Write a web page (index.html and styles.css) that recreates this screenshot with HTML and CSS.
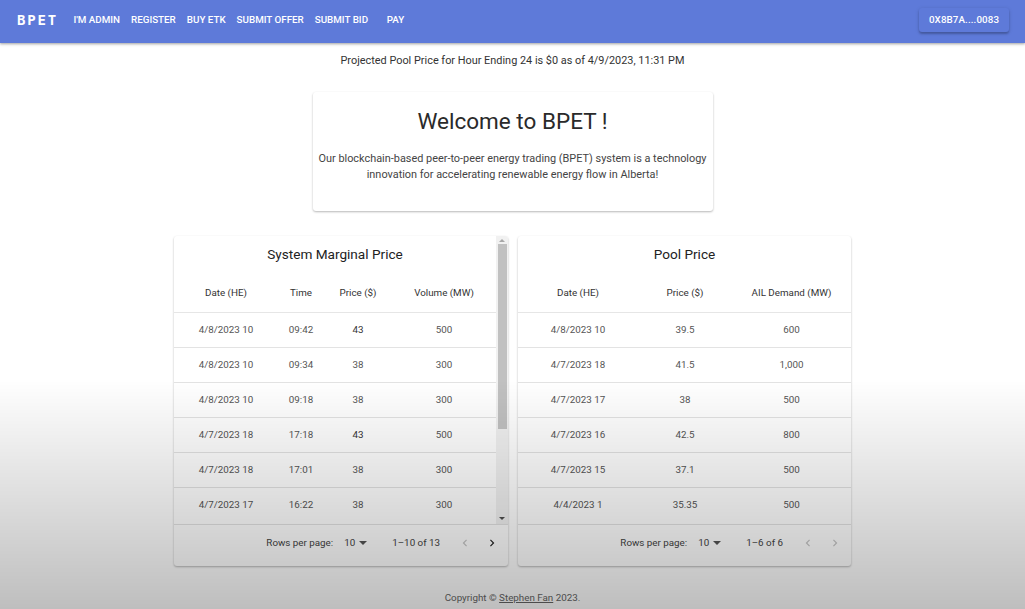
FILE: index.html
```html
<!DOCTYPE html>
<html lang="en">
<head>
<meta charset="utf-8">
<title>BPET</title>
<link rel="stylesheet" href="styles.css">
</head>
<body>
<header class="appbar">
  <div class="logo">BPET</div>
  <nav class="nav">
    <a class="nav-btn">I'M ADMIN</a>
    <a class="nav-btn">REGISTER</a>
    <a class="nav-btn">BUY ETK</a>
    <a class="nav-btn">SUBMIT OFFER</a>
    <a class="nav-btn">SUBMIT BID</a>
    <a class="nav-btn">PAY</a>
  </nav>
  <button class="wallet">0X8B7A....0083</button>
</header>

<main class="main">
  <p class="projected">Projected Pool Price for Hour Ending 24 is $0 as of 4/9/2023, 11:31 PM</p>

  <section class="card welcome">
    <h1 class="welcome-title">Welcome to BPET !</h1>
    <p class="welcome-text">Our blockchain-based peer-to-peer energy trading (BPET) system is a technology<br>innovation for accelerating renewable energy flow in Alberta!</p>
  </section>

  <div class="tables">
    <section class="card table-card">
      <div class="table-body">
        <div class="scroll">
          <h2 class="table-title">System Marginal Price</h2>
          <table class="data smp">
            <colgroup><col class="c1"><col class="c2"><col class="c3"><col class="c4"></colgroup>
            <thead><tr><th>Date (HE)</th><th>Time</th><th>Price ($)</th><th>Volume (MW)</th></tr></thead>
            <tbody>
              <tr><td>4/8/2023 10</td><td>09:42</td><td class="dark">43</td><td>500</td></tr>
              <tr><td>4/8/2023 10</td><td>09:34</td><td>38</td><td>300</td></tr>
              <tr><td>4/8/2023 10</td><td>09:18</td><td>38</td><td>300</td></tr>
              <tr><td>4/7/2023 18</td><td>17:18</td><td class="dark">43</td><td>500</td></tr>
              <tr><td>4/7/2023 18</td><td>17:01</td><td>38</td><td>300</td></tr>
              <tr><td>4/7/2023 17</td><td>16:22</td><td>38</td><td>300</td></tr>
            </tbody>
          </table>
        </div>
        <div class="scrollbar" aria-hidden="true">
          <span class="sb-arrow"><svg width="6" height="3" viewBox="0 0 6 3"><path d="M0 3h6L3 0z" fill="#a8a8a8"/></svg></span>
          <span class="sb-thumb"></span>
          <span class="sb-track"></span>
          <span class="sb-arrow"><svg width="6" height="3" viewBox="0 0 6 3"><path d="M0 0h6L3 3z" fill="#505050"/></svg></span>
        </div>
      </div>
      <div class="pager">
        <span class="pager-label">Rows per page:</span>
        <span class="pager-select">10 <svg class="caret" width="8" height="4" viewBox="0 0 8 4"><path d="M0 0h8L4 4z" fill="#555"/></svg></span>
        <span class="pager-range">1–10 of 13</span>
        <span class="pager-btn off"><svg width="14" height="14" viewBox="0 0 24 24"><path d="M15.41 7.41 14 6l-6 6 6 6 1.41-1.41L10.830 12z" fill="currentColor"/></svg></span>
        <span class="pager-btn"><svg width="14" height="14" viewBox="0 0 24 24"><path d="M10 6 8.59 7.41 13.17 12l-4.58 4.59L10 18l6-6z" fill="currentColor"/></svg></span>
      </div>
    </section>

    <section class="card table-card">
      <div class="table-body">
        <div class="scroll">
          <h2 class="table-title">Pool Price</h2>
          <table class="data pool">
            <colgroup><col class="p1"><col class="p2"><col class="p3"></colgroup>
            <thead><tr><th>Date (HE)</th><th>Price ($)</th><th>AIL Demand (MW)</th></tr></thead>
            <tbody>
              <tr><td>4/8/2023 10</td><td>39.5</td><td>600</td></tr>
              <tr><td>4/7/2023 18</td><td>41.5</td><td>1,000</td></tr>
              <tr><td>4/7/2023 17</td><td>38</td><td>500</td></tr>
              <tr><td>4/7/2023 16</td><td>42.5</td><td>800</td></tr>
              <tr><td>4/7/2023 15</td><td>37.1</td><td>500</td></tr>
              <tr><td>4/4/2023 1</td><td>35.35</td><td>500</td></tr>
            </tbody>
          </table>
        </div>
      </div>
      <div class="pager">
        <span class="pager-label">Rows per page:</span>
        <span class="pager-select">10 <svg class="caret" width="8" height="4" viewBox="0 0 8 4"><path d="M0 0h8L4 4z" fill="#555"/></svg></span>
        <span class="pager-range">1–6 of 6</span>
        <span class="pager-btn off"><svg width="14" height="14" viewBox="0 0 24 24"><path d="M15.41 7.41 14 6l-6 6 6 6 1.41-1.41L10.83 12z" fill="currentColor"/></svg></span>
        <span class="pager-btn off"><svg width="14" height="14" viewBox="0 0 24 24"><path d="M10 6 8.59 7.41 13.17 12l-4.58 4.59L10 18l6-6z" fill="currentColor"/></svg></span>
      </div>
    </section>
  </div>

  <footer class="footer">Copyright © <a class="footer-link">Stephen Fan</a> 2023.</footer>
</main>
<div class="shade"></div>
</body>
</html>
```

FILE: styles.css
```css
* { box-sizing: border-box; }
html, body { margin: 0; padding: 0; }
body {
  font-family: Roboto, "Liberation Sans", sans-serif;
  background: #fff;
  color: #333;
  width: 1025px;
  height: 609px;
  overflow: hidden;
}

.appbar {
  height: 43px;
  background: #5e7ad9;
  display: flex;
  align-items: center;
  padding: 0 16px 0 17px;
  box-shadow: 0 1px 2px rgba(0,0,0,0.25), 0 2px 3px rgba(0,0,0,0.1);
  position: relative;
  z-index: 2;
}
.logo {
  font-family: "DejaVu Sans Mono", monospace;
  font-weight: 700;
  font-size: 14px;
  letter-spacing: 1.8px;
  color: #fff;
  margin-right: 10px;
  margin-top: -3px;
}
.nav { display: flex; align-items: center; flex: 1; margin-top: -3px; }
.nav-btn {
  font-size: 9.8px;
  font-weight: 500;
  letter-spacing: 0;
  color: #fff;
  padding: 0 5.5px;
  min-width: 44px;
  text-align: center;
  line-height: 16px;
}
.wallet {
  font-family: Roboto, "Liberation Sans", sans-serif;
  font-size: 9.8px;
  font-weight: 500;
  letter-spacing: 0.1px;
  color: #fff;
  background: #5e7ad9;
  border: 0;
  border-radius: 3px;
  height: 24px;
  width: 90px;
  padding: 0;
  margin-top: -4px;
  box-shadow: 0 2px 2px rgba(0,0,0,0.2), 0 1px 4px rgba(0,0,0,0.14);
}

.main { display: flex; flex-direction: column; align-items: center; }
.projected {
  margin: 10px 0 0;
  font-size: 10.9px;
  line-height: 16px;
  color: #333;
}
.card {
  background: #fff;
  border-radius: 3px;
  box-shadow: 0 1px 2px rgba(0,0,0,0.22), 0 1px 3px rgba(0,0,0,0.08);
}
.welcome {
  width: 400px;
  margin-top: 23px;
  height: 119px;
  padding-top: 14px;
  text-align: center;
}
.welcome-title {
  margin: 0;
  font-size: 22.5px;
  font-weight: 400;
  line-height: 30px;
  color: #2a2a2a;
}
.welcome-text {
  margin: 15px 0 0;
  font-size: 10.9px;
  line-height: 16px;
  color: #444;
  white-space: nowrap;
}

.tables { display: flex; gap: 10px; margin-top: 25px; }
.table-card { width: 334px; overflow: hidden; }
.table-card + .table-card { width: 333px; }
.table-body { display: flex; height: 288px; }
.scroll { flex: 1; min-width: 0; }

.scrollbar {
  width: 12px;
  background: #f1f1f1;
  display: flex;
  flex-direction: column;
  align-items: center;
  padding-bottom: 2px;
}
.sb-arrow { height: 8px; display: flex; align-items: center; justify-content: center; }
.sb-thumb { width: 9px; height: 185px; background: #c1c1c1; }
.sb-track { flex: 1; }

.table-title {
  margin: 0;
  padding: 9px 0 10px;
  font-size: 13.6px;
  font-weight: 400;
  line-height: 18px;
  text-align: center;
  color: #222;
}
.data { width: 100%; border-collapse: collapse; table-layout: fixed; }
.smp .c1 { width: 104px; }
.smp .c2 { width: 46px; }
.smp .c3 { width: 68px; }
.smp .c4 { width: 104px; }
.pool .p1 { width: 120px; }
.pool .p2 { width: 94px; }
.pool .p3 { width: 119px; }
.data th {
  font-size: 9.8px;
  font-weight: 400;
  color: #333;
  line-height: 14px;
  padding: 13px 0 12px;
  text-align: center;
  border-bottom: 1px solid #e6e6e6;
}
.data td {
  font-size: 9.8px;
  color: #555;
  line-height: 12px;
  padding: 11px 0 11px;
  text-align: center;
  border-bottom: 1px solid #e3e3e3;
}
.data tbody tr:last-child td { border-bottom: 0; }
.data td.dark { color: #333; }

.pager {
  height: 42px;
  display: flex;
  align-items: center;
  justify-content: flex-end;
  padding: 0 4px 6px 0;
  font-size: 9.8px;
  color: #444;
  border-top: 1px solid #e3e3e3;
}
.pager-label { margin-right: 11px; }
.pager-select { display: flex; align-items: center; gap: 4px; margin-right: 25px; }
.caret { margin-top: 1px; }
.pager-range { margin-right: 13px; }
.pager-btn {
  width: 24px; height: 24px;
  display: flex; align-items: center; justify-content: center;
  color: #222;
}
.pager-btn + .pager-btn { margin-left: 3px; }
.pager-btn.off { color: #c4c4c4; }

.footer {
  margin-top: 25px;
  font-size: 9.8px;
  color: #666;
  line-height: 14px;
}
.footer-link { color: #666; text-decoration: underline; }

.shade {
  position: fixed;
  inset: 0;
  pointer-events: none;
  background: linear-gradient(to bottom, rgba(0,0,0,0) 380px, rgba(0,0,0,0.255) 609px);
  z-index: 5;
}
```
